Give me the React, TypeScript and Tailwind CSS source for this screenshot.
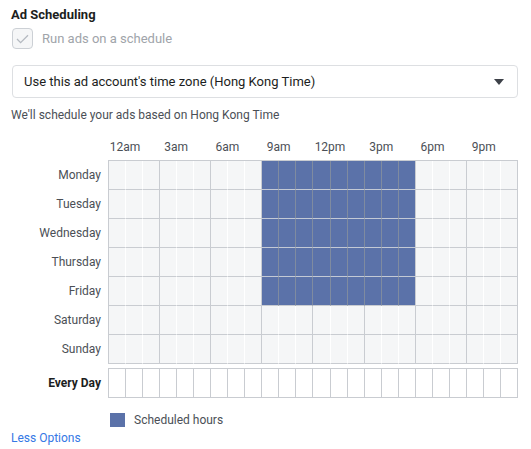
import React from 'react';

const DAYS = ['Monday', 'Tuesday', 'Wednesday', 'Thursday', 'Friday', 'Saturday', 'Sunday'];
const TIMES = ['12am', '3am', '6am', '9am', '12pm', '3pm', '6pm', '9pm'];

function isScheduled(day: number, hour: number) {
  return day < 5 && hour >= 9 && hour < 18;
}

function cellClass(day: number, hour: number) {
  const filled = isScheduled(day, hour);
  let right = 'border-r-white';
  if (hour === 23) right = 'border-r-[#c9ccd1]';
  else if (filled && hour < 17) right = 'border-r-[#7f8ba0]';
  else if (hour % 3 === 2) right = 'border-r-[#c9ccd1]';
  const bottom = filled && day < 4 ? 'border-b-[#c3c9d5]' : 'border-b-[#c9ccd1]';
  const bg = filled ? 'bg-[#5b72a9]' : 'bg-[#f5f6f7]';
  return `h-[29px] border-r border-b ${right} ${bottom} ${bg}`;
}

export default function App() {
  return (
    <div className="w-[531px] h-[449px] bg-white pl-[11px] pt-[6px] font-['Roboto',sans-serif] text-[#4b4f56]">
      <h2 className="text-[13px] leading-[18px] font-bold text-[#1c1e21]">Ad Scheduling</h2>

      <label className="mt-[4px] flex items-center gap-[9px]">
        <span className="ml-[1px] flex h-[21px] w-[21px] items-center justify-center rounded-[4px] border border-[#ccd0d5] bg-[#f5f6f7]">
          <svg width="13" height="10" viewBox="0 0 13 10" fill="none">
            <path d="M1 5l3.6 3.6L12 1.2" stroke="#b4b9c0" strokeWidth="1.3" />
          </svg>
        </span>
        <span className="text-[13px] leading-[18px] text-[#a0a4aa]">Run ads on a schedule</span>
      </label>

      <div className="mt-[16px] ml-[1px] flex h-[33px] w-[506px] items-center justify-between rounded-[4px] border border-[#dddfe2] pl-[11px] pr-[13px]">
        <span className="text-[13px] leading-[18px] text-[#1c1e21]">
          Use this ad account's time zone (Hong Kong Time)
        </span>
        <svg width="10" height="6" viewBox="0 0 10 6">
          <path d="M0 0h10L5 6z" fill="#3d4148" />
        </svg>
      </div>

      <p className="mt-[9px] text-[12px] leading-[16px] text-[#4b4f56]">
        We'll schedule your ads based on Hong Kong Time
      </p>

      <div className="mt-[16px] ml-[97px] grid w-[410px] grid-cols-8">
        {TIMES.map((t) => (
          <span key={t} className="w-[34px] text-center text-[12px] leading-[16px] whitespace-nowrap">
            {t}
          </span>
        ))}
      </div>

      <div className="mt-[5px] flex">
        <div className="w-[97px] pr-[7px] text-right">
          {DAYS.map((d) => (
            <div key={d} className="flex h-[29px] items-center justify-end text-[12px] leading-[16px]">
              {d}
            </div>
          ))}
        </div>
        <div className="grid w-[410px] grid-cols-[repeat(24,1fr)] border-l border-t border-[#c9ccd1]">
          {DAYS.map((d, day) =>
            Array.from({ length: 24 }).map((_, hour) => (
              <div key={`${d}-${hour}`} className={cellClass(day, hour)} />
            ))
          )}
        </div>
      </div>

      <div className="mt-[4px] flex">
        <div className="flex h-[30px] w-[97px] items-center justify-end pr-[7px] text-[12px] leading-[16px] font-bold text-[#1c1e21]">
          Every Day
        </div>
        <div className="grid w-[410px] grid-cols-[repeat(24,1fr)] border-l border-t border-[#c9ccd1]">
          {Array.from({ length: 24 }).map((_, hour) => (
            <div key={hour} className="h-[29px] border-r border-b border-[#c9ccd1] bg-white" />
          ))}
        </div>
      </div>

      <div className="mt-[14px] ml-[99px] flex items-center gap-[9px]">
        <span className="h-[14px] w-[15px] bg-[#5b72a9]" />
        <span className="text-[12px] leading-[16px]">Scheduled hours</span>
      </div>

      <a className="mt-[2px] block text-[12px] leading-[16px] text-[#3578e5]">Less Options</a>
    </div>
  );
}
